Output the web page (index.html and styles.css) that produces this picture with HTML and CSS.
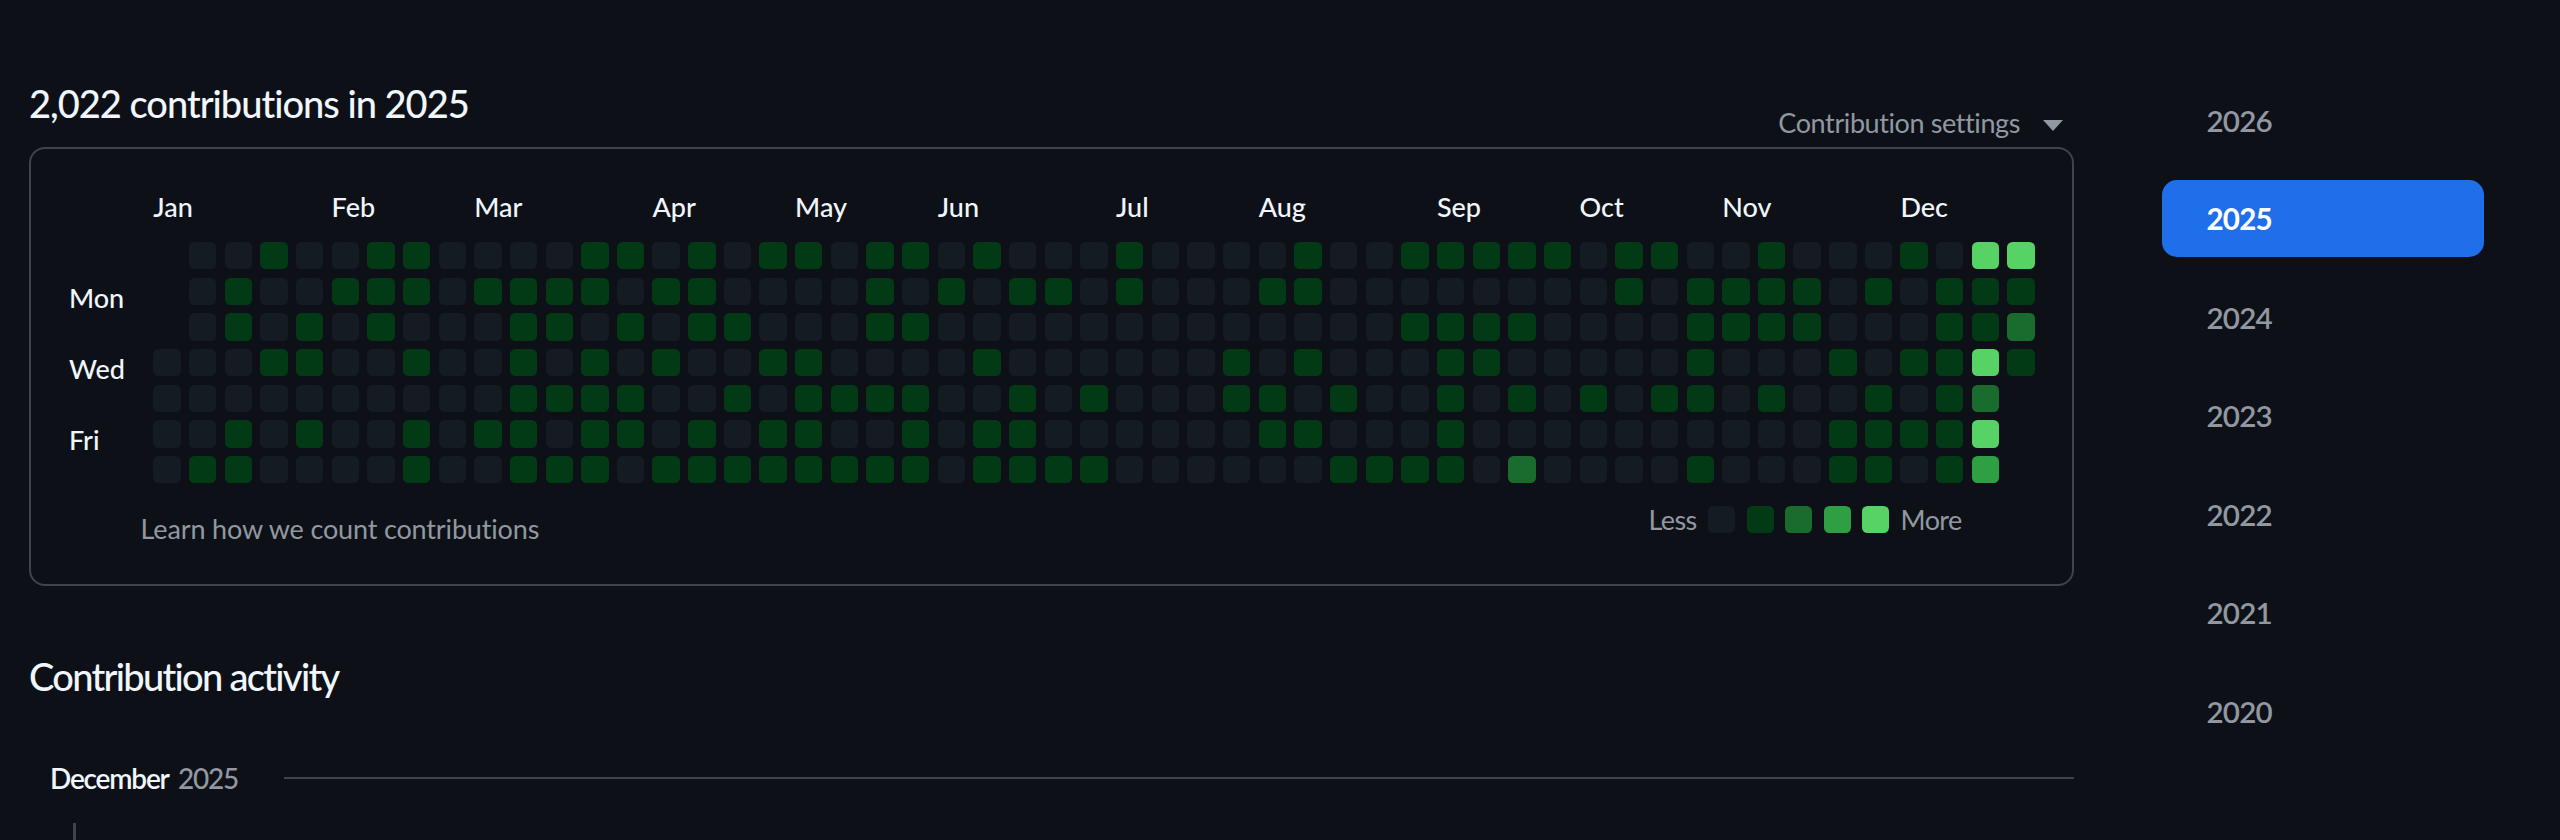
FILE: index.html
```html
<!DOCTYPE html>
<html lang="en">
<head>
<meta charset="utf-8">
<title>Contributions</title>
<link rel="stylesheet" href="styles.css">
</head>
<body>
<div class="page">
  <main class="main">
    <div class="header">
      <h2 class="title">2,022 contributions in 2025</h2>
      <div class="settings"><span>Contribution settings</span><span class="caret"></span></div>
    </div>
    <section class="calendar">
      <div class="months">
        <span class="m-jan">Jan</span><span class="m-feb">Feb</span><span class="m-mar">Mar</span><span class="m-apr">Apr</span><span class="m-may">May</span><span class="m-jun">Jun</span><span class="m-jul">Jul</span><span class="m-aug">Aug</span><span class="m-sep">Sep</span><span class="m-oct">Oct</span><span class="m-nov">Nov</span><span class="m-dec">Dec</span>
      </div>
      <div class="graph">
        <div class="days"><span></span><span>Mon</span><span></span><span>Wed</span><span></span><span>Fri</span><span></span></div>
        <div class="cells">
<i class="e"></i><i class="e"></i><i class="e"></i><i class="l0"></i><i class="l0"></i><i class="l0"></i><i class="l0"></i>
<i class="l0"></i><i class="l0"></i><i class="l0"></i><i class="l0"></i><i class="l0"></i><i class="l0"></i><i class="l1"></i>
<i class="l0"></i><i class="l1"></i><i class="l1"></i><i class="l0"></i><i class="l0"></i><i class="l1"></i><i class="l1"></i>
<i class="l1"></i><i class="l0"></i><i class="l0"></i><i class="l1"></i><i class="l0"></i><i class="l0"></i><i class="l0"></i>
<i class="l0"></i><i class="l0"></i><i class="l1"></i><i class="l1"></i><i class="l0"></i><i class="l1"></i><i class="l0"></i>
<i class="l0"></i><i class="l1"></i><i class="l0"></i><i class="l0"></i><i class="l0"></i><i class="l0"></i><i class="l0"></i>
<i class="l1"></i><i class="l1"></i><i class="l1"></i><i class="l0"></i><i class="l0"></i><i class="l0"></i><i class="l0"></i>
<i class="l1"></i><i class="l1"></i><i class="l0"></i><i class="l1"></i><i class="l0"></i><i class="l1"></i><i class="l1"></i>
<i class="l0"></i><i class="l0"></i><i class="l0"></i><i class="l0"></i><i class="l0"></i><i class="l0"></i><i class="l0"></i>
<i class="l0"></i><i class="l1"></i><i class="l0"></i><i class="l0"></i><i class="l0"></i><i class="l1"></i><i class="l0"></i>
<i class="l0"></i><i class="l1"></i><i class="l1"></i><i class="l1"></i><i class="l1"></i><i class="l1"></i><i class="l1"></i>
<i class="l0"></i><i class="l1"></i><i class="l1"></i><i class="l0"></i><i class="l1"></i><i class="l0"></i><i class="l1"></i>
<i class="l1"></i><i class="l1"></i><i class="l0"></i><i class="l1"></i><i class="l1"></i><i class="l1"></i><i class="l1"></i>
<i class="l1"></i><i class="l0"></i><i class="l1"></i><i class="l0"></i><i class="l1"></i><i class="l1"></i><i class="l0"></i>
<i class="l0"></i><i class="l1"></i><i class="l0"></i><i class="l1"></i><i class="l0"></i><i class="l0"></i><i class="l1"></i>
<i class="l1"></i><i class="l1"></i><i class="l1"></i><i class="l0"></i><i class="l0"></i><i class="l1"></i><i class="l1"></i>
<i class="l0"></i><i class="l0"></i><i class="l1"></i><i class="l0"></i><i class="l1"></i><i class="l0"></i><i class="l1"></i>
<i class="l1"></i><i class="l0"></i><i class="l0"></i><i class="l1"></i><i class="l0"></i><i class="l1"></i><i class="l1"></i>
<i class="l1"></i><i class="l0"></i><i class="l0"></i><i class="l1"></i><i class="l1"></i><i class="l1"></i><i class="l1"></i>
<i class="l0"></i><i class="l0"></i><i class="l0"></i><i class="l0"></i><i class="l1"></i><i class="l0"></i><i class="l1"></i>
<i class="l1"></i><i class="l1"></i><i class="l1"></i><i class="l0"></i><i class="l1"></i><i class="l0"></i><i class="l1"></i>
<i class="l1"></i><i class="l0"></i><i class="l1"></i><i class="l0"></i><i class="l1"></i><i class="l1"></i><i class="l1"></i>
<i class="l0"></i><i class="l1"></i><i class="l0"></i><i class="l0"></i><i class="l0"></i><i class="l0"></i><i class="l0"></i>
<i class="l1"></i><i class="l0"></i><i class="l0"></i><i class="l1"></i><i class="l0"></i><i class="l1"></i><i class="l1"></i>
<i class="l0"></i><i class="l1"></i><i class="l0"></i><i class="l0"></i><i class="l1"></i><i class="l1"></i><i class="l1"></i>
<i class="l0"></i><i class="l1"></i><i class="l0"></i><i class="l0"></i><i class="l0"></i><i class="l0"></i><i class="l1"></i>
<i class="l0"></i><i class="l0"></i><i class="l0"></i><i class="l0"></i><i class="l1"></i><i class="l0"></i><i class="l1"></i>
<i class="l1"></i><i class="l1"></i><i class="l0"></i><i class="l0"></i><i class="l0"></i><i class="l0"></i><i class="l0"></i>
<i class="l0"></i><i class="l0"></i><i class="l0"></i><i class="l0"></i><i class="l0"></i><i class="l0"></i><i class="l0"></i>
<i class="l0"></i><i class="l0"></i><i class="l0"></i><i class="l0"></i><i class="l0"></i><i class="l0"></i><i class="l0"></i>
<i class="l0"></i><i class="l0"></i><i class="l0"></i><i class="l1"></i><i class="l1"></i><i class="l0"></i><i class="l0"></i>
<i class="l0"></i><i class="l1"></i><i class="l0"></i><i class="l0"></i><i class="l1"></i><i class="l1"></i><i class="l0"></i>
<i class="l1"></i><i class="l1"></i><i class="l0"></i><i class="l1"></i><i class="l0"></i><i class="l1"></i><i class="l0"></i>
<i class="l0"></i><i class="l0"></i><i class="l0"></i><i class="l0"></i><i class="l1"></i><i class="l0"></i><i class="l1"></i>
<i class="l0"></i><i class="l0"></i><i class="l0"></i><i class="l0"></i><i class="l0"></i><i class="l0"></i><i class="l1"></i>
<i class="l1"></i><i class="l0"></i><i class="l1"></i><i class="l0"></i><i class="l0"></i><i class="l0"></i><i class="l1"></i>
<i class="l1"></i><i class="l0"></i><i class="l1"></i><i class="l1"></i><i class="l1"></i><i class="l1"></i><i class="l1"></i>
<i class="l1"></i><i class="l0"></i><i class="l1"></i><i class="l1"></i><i class="l0"></i><i class="l0"></i><i class="l0"></i>
<i class="l1"></i><i class="l0"></i><i class="l1"></i><i class="l0"></i><i class="l1"></i><i class="l0"></i><i class="l2"></i>
<i class="l1"></i><i class="l0"></i><i class="l0"></i><i class="l0"></i><i class="l0"></i><i class="l0"></i><i class="l0"></i>
<i class="l0"></i><i class="l0"></i><i class="l0"></i><i class="l0"></i><i class="l1"></i><i class="l0"></i><i class="l0"></i>
<i class="l1"></i><i class="l1"></i><i class="l0"></i><i class="l0"></i><i class="l0"></i><i class="l0"></i><i class="l0"></i>
<i class="l1"></i><i class="l0"></i><i class="l0"></i><i class="l0"></i><i class="l1"></i><i class="l0"></i><i class="l0"></i>
<i class="l0"></i><i class="l1"></i><i class="l1"></i><i class="l1"></i><i class="l1"></i><i class="l0"></i><i class="l1"></i>
<i class="l0"></i><i class="l1"></i><i class="l1"></i><i class="l0"></i><i class="l0"></i><i class="l0"></i><i class="l0"></i>
<i class="l1"></i><i class="l1"></i><i class="l1"></i><i class="l0"></i><i class="l1"></i><i class="l0"></i><i class="l0"></i>
<i class="l0"></i><i class="l1"></i><i class="l1"></i><i class="l0"></i><i class="l0"></i><i class="l0"></i><i class="l0"></i>
<i class="l0"></i><i class="l0"></i><i class="l0"></i><i class="l1"></i><i class="l0"></i><i class="l1"></i><i class="l1"></i>
<i class="l0"></i><i class="l1"></i><i class="l0"></i><i class="l0"></i><i class="l1"></i><i class="l1"></i><i class="l1"></i>
<i class="l1"></i><i class="l0"></i><i class="l0"></i><i class="l1"></i><i class="l0"></i><i class="l1"></i><i class="l0"></i>
<i class="l0"></i><i class="l1"></i><i class="l1"></i><i class="l1"></i><i class="l1"></i><i class="l1"></i><i class="l1"></i>
<i class="l4"></i><i class="l1"></i><i class="l1"></i><i class="l4"></i><i class="l2"></i><i class="l4"></i><i class="l3"></i>
<i class="l4"></i><i class="l1"></i><i class="l2"></i><i class="l1"></i>
        </div>
      </div>
      <div class="cal-footer">
        <span class="learn">Learn how we count contributions</span>
        <div class="legend">
          <span>Less</span><i class="l0"></i><i class="l1"></i><i class="l2"></i><i class="l3"></i><i class="l4"></i><span>More</span>
        </div>
      </div>
    </section>
    <h2 class="activity-title">Contribution activity</h2>
    <div class="month-head">
      <h3 class="month-name">December <span class="month-year">2025</span></h3>
      <div class="month-rule"></div>
    </div>
    <div class="timeline"></div>
  </main>
  <nav class="years">
    <a class="year">2026</a>
    <a class="year active">2025</a>
    <a class="year">2024</a>
    <a class="year">2023</a>
    <a class="year">2022</a>
    <a class="year">2021</a>
    <a class="year">2020</a>
  </nav>
</div>
</body>
</html>
```
FILE: styles.css
```css
* { box-sizing: border-box; }

html, body {
  margin: 0;
  padding: 0;
  background: #0d1117;
}

body {
  font-family: Lato, "Noto Sans", sans-serif;
  color: #f0f6fc;
  height: 840px;
  overflow: hidden;
}

.page {
  display: flex;
  gap: 88px;
  height: 840px;
  padding-left: 29px;
  overflow: hidden;
}

.main {
  width: 2045px;
  padding-top: 78.6px;
}

/* header */
.header {
  display: flex;
  justify-content: space-between;
  align-items: flex-start;
  margin-bottom: 7.6px;
}

.title {
  margin: 0;
  font-size: 38px;
  line-height: 48px;
  font-weight: 500;
  letter-spacing: -1px;
}

.settings {
  display: flex;
  align-items: center;
  gap: 23px;
  margin-top: 28.8px;
  margin-right: 11px;
  font-size: 27px;
  line-height: 32px;
  letter-spacing: -0.4px;
  color: #9198a1;
}

.caret {
  width: 0;
  height: 0;
  margin-top: 5px;
  border-top: 11px solid #9198a1;
  border-left: 10px solid transparent;
  border-right: 10px solid transparent;
}

/* calendar box */
.calendar {
  border: 2px solid #3d444d;
  border-radius: 16px;
  padding: 41.9px 0 39.3px 38px;
}

.months {
  display: grid;
  grid-template-columns: repeat(53, 27.37px);
  column-gap: 8.3px;
  height: 32px;
  margin-left: 84.3px;
  margin-bottom: 19.1px;
  font-size: 27px;
  line-height: 32px;
  font-weight: 500;
  white-space: nowrap;
}

.months span { grid-row: 1; }
.m-jan { grid-column: 1; }
.m-feb { grid-column: 6; }
.m-mar { grid-column: 10; }
.m-apr { grid-column: 15; }
.m-may { grid-column: 19; }
.m-jun { grid-column: 23; }
.m-jul { grid-column: 28; }
.m-aug { grid-column: 32; }
.m-sep { grid-column: 37; }
.m-oct { grid-column: 41; }
.m-nov { grid-column: 45; }
.m-dec { grid-column: 50; }

.graph {
  display: flex;
}

.days {
  display: grid;
  grid-template-rows: repeat(7, 27.37px);
  row-gap: 8.3px;
  width: 84.3px;
  font-size: 27px;
  line-height: 39.4px;
  font-weight: 500;
}

.cells {
  display: grid;
  grid-auto-flow: column;
  grid-template-rows: repeat(7, 27.37px);
  grid-auto-columns: 27.37px;
  gap: 8.3px;
}

.cells i,
.legend i {
  display: block;
  border-radius: 5.5px;
}

.legend i {
  width: 27px;
  height: 27px;
}

.e { visibility: hidden; }
.l0 { background: #151b23; }
.l1 { background: #033a16; }
.l2 { background: #196c2e; }
.l3 { background: #2ea043; }
.l4 { background: #56d364; }

.cal-footer {
  display: flex;
  justify-content: space-between;
  align-items: flex-start;
  margin-top: 22.3px;
  padding-left: 71.6px;
  padding-right: 110.3px;
  color: #9198a1;
  font-size: 27px;
}

.learn {
  margin-top: 7px;
  line-height: 32px;
  letter-spacing: -0.15px;
}

.legend {
  display: flex;
  align-items: center;
  gap: 11.5px;
  line-height: 27px;
  letter-spacing: -0.6px;
}

/* activity */
.activity-title {
  margin: 66.3px 0 0;
  font-size: 38px;
  line-height: 48px;
  font-weight: 500;
  letter-spacing: -1.7px;
}

.month-head {
  display: flex;
  align-items: center;
  margin-top: 59.7px;
  padding-left: 21px;
}

.month-name {
  margin: 0;
  font-size: 28px;
  line-height: 36px;
  font-weight: 600;
  letter-spacing: -1.2px;
  word-spacing: 4px;
  white-space: nowrap;
}

.month-year {
  color: #9198a1;
  font-weight: 500;
}

.month-rule {
  flex: 1;
  height: 2px;
  margin-left: 46px;
  background: #3d444d;
}

.timeline {
  width: 3px;
  height: 17px;
  margin: 27px 0 0 44px;
  background: #3d444d;
}

/* year list */
.years {
  display: flex;
  flex-direction: column;
  gap: 21.5px;
  width: 322px;
  padding-top: 81.5px;
}

.year {
  display: flex;
  align-items: center;
  height: 77px;
  padding-left: 44.5px;
  border-radius: 15px;
  font-size: 29.6px;
  font-weight: 600;
  letter-spacing: -0.8px;
  color: #9198a1;
}

.year.active {
  background: #1f6feb;
  color: #ffffff;
  font-weight: 700;
}
```
